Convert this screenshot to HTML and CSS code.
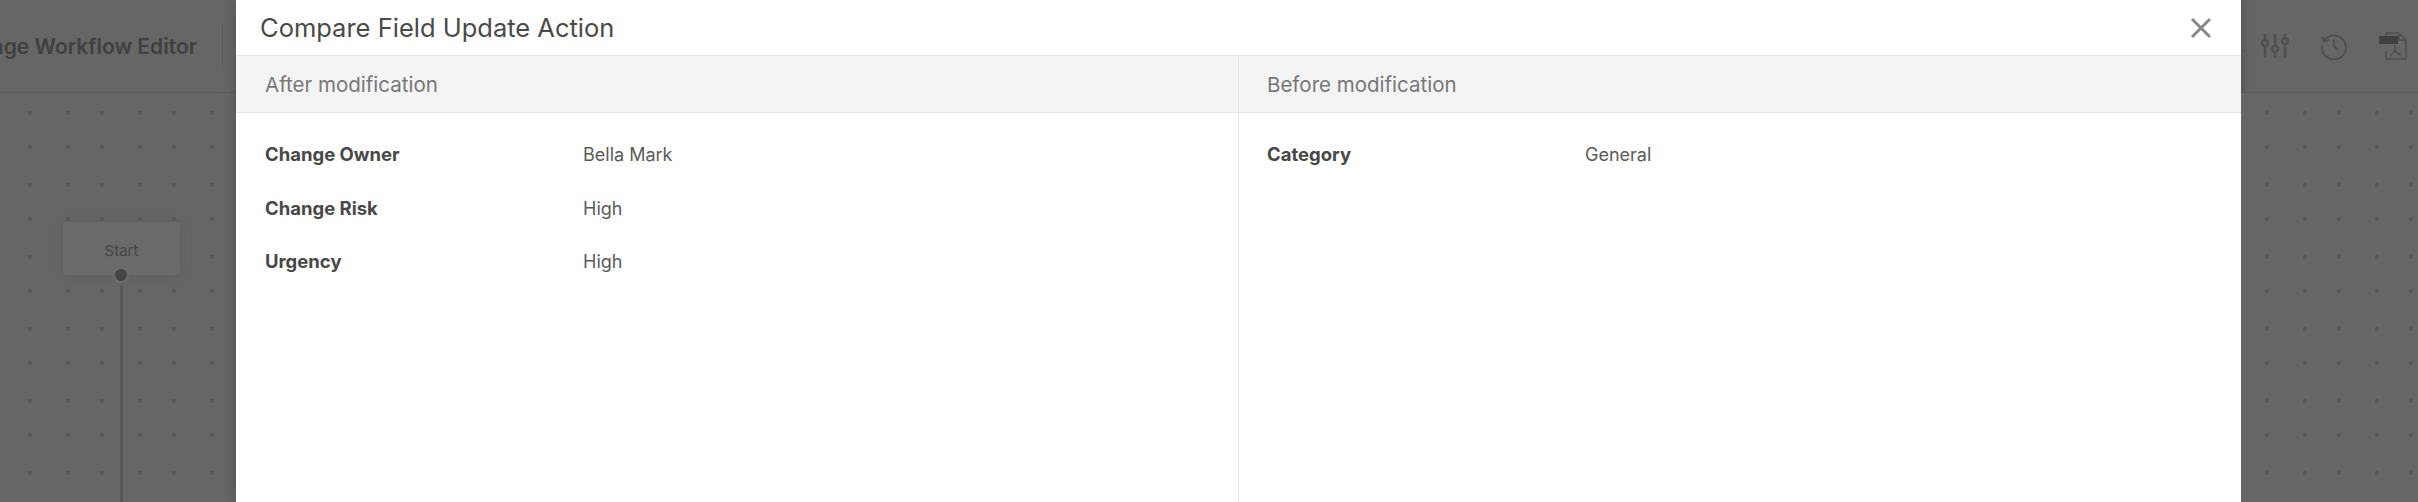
FILE: index.html
```html
<!doctype html>
<html>
<head>
<meta charset="utf-8">
<title>Compare Field Update Action</title>
<link rel="stylesheet" href="styles.css">
</head>
<body>
<div class="app">
    <div class="side side-left">
        <div class="topbar topbar-left">
            <span class="page-title">Change Workflow Editor</span>
            <span class="top-sep"></span>
        </div>
        <div class="canvas">
            <div class="node-start">Start<span class="node-port"></span></div>
            <div class="node-line"></div>
        </div>
    </div>

    <div class="modal">
        <div class="modal-head">
            <span class="modal-title">Compare Field Update Action</span>
            <svg class="modal-close" width="22" height="22" viewBox="0 0 22 22"><path d="M2 2L20 20M20 2L2 20" fill="none" stroke="#888" stroke-width="3"/></svg>
        </div>
        <div class="compare">
            <div class="col">
                <div class="col-head">After modification</div>
                <div class="col-body">
                    <div class="row"><span class="row-label">Change Owner</span><span class="row-value">Bella Mark</span></div>
                    <div class="row"><span class="row-label">Change Risk</span><span class="row-value">High</span></div>
                    <div class="row"><span class="row-label">Urgency</span><span class="row-value">High</span></div>
                </div>
            </div>
            <div class="col col-right">
                <div class="col-head">Before modification</div>
                <div class="col-body">
                    <div class="row"><span class="row-label">Category</span><span class="row-value">General</span></div>
                </div>
            </div>
        </div>
    </div>

    <div class="side side-right">
        <div class="topbar topbar-right">
            <svg width="28" height="26" viewBox="0 0 28 26" fill="none" stroke="#505050" stroke-width="2.4">
                <path d="M4 1V7M4 13V25M14 1V13M14 19V25M24 1V5M24 11V25"/>
                <circle cx="4" cy="10" r="3"/><circle cx="14" cy="16" r="3"/><circle cx="24" cy="8" r="3"/>
            </svg>
            <svg width="28" height="28" viewBox="0 0 28 28" fill="none" stroke="#505050" stroke-width="2">
                <path d="M4.500 8A12 12 0 1 1 2 14"/><path d="M2 5L4 9.500L9 8"/><path d="M14 8V14L18 18"/>
            </svg>
            <svg width="28" height="28" viewBox="0 0 28 28" fill="none" stroke="#505050" stroke-width="1.600">
                <path d="M7 12V1H20L27 8V27H7V19"/><path d="M20 1V8H27"/>
                <rect x="0" y="4" width="19" height="8" fill="#404040" stroke="none"/>
                <path d="M16 13V19L11 24M16 19L22 23"/>
            </svg>
        </div>
        <div class="canvas"></div>
    </div>
</div>
</body>
</html>
```

FILE: styles.css
```css
* {margin:0; padding:0; box-sizing:border-box;}
html,body {height:100%; overflow:hidden;}
body {
	font-family:Inter, 'Noto Sans', sans-serif;
	background:#666;
}
.app {
	display:grid;
	grid-template-columns:236px 2005px 177px;
	height:502px;
}

/* dimmed page behind the dialog */
.side {display:flex; flex-direction:column; min-width:0; overflow:hidden;}
.topbar {
	display:flex;
	align-items:center;
	height:93px;
	flex:none;
	border-bottom:1px solid #606060;
}
.topbar-left {justify-content:flex-end; padding-right:13px;}
.page-title {
	flex:none;
	font-size:21px;
	font-weight:600;
	color:#404040;
	white-space:nowrap;
}
.top-sep {
	flex:none;
	width:1px;
	height:44px;
	margin-left:25px;
	background:#5f5f5f;
}
.topbar-right {gap:31px; padding-left:20px;}

/* four dots in each 72px tile, that is why the spacing goes 38/34 */
.canvas {
	position:relative;
	flex:1;
	background-color:#666;
	background-image:
		radial-gradient(circle, #585858 1.5px, transparent 2.500px),
		radial-gradient(circle, #585858 1.5px, transparent 2.500px),
		radial-gradient(circle, #585858 1.5px, transparent 2.500px),
		radial-gradient(circle, #585858 1.5px, transparent 2.500px);
	background-size:72px 72px;
	background-position:-6px -16px, 32px -16px, -6px 18px, 32px 18px;
}
.side-right .canvas {background-position:-10px -16px, 28px -16px, -10px 18px, 28px 18px;}

.node-start {
	position:absolute;
	left:63px;
	top:129px;
	width:117px;
	height:53px;
	text-align:center;
	line-height:58px;
	font-size:15px;
	color:#464646;
	background:#6a6a6a;
	box-shadow:0 0 8px #5e5e5e;
}
.node-port {
	position:absolute;
	left:52px;
	top:47px;
	width:12px;
	height:12px;
	border-radius:50%;
	background:#444;
	box-shadow:0 0 0 2px #6c6c6c;
}
.node-line {
	position:absolute;
	left:120px;
	top:192px;
	bottom:0;
	width:3px;
	background:#585858;
}

/* dialog */
.modal {
	position:relative;
	display:flex;
	flex-direction:column;
	background:#fff;
	box-shadow:0 0 12px rgba(0,0,0,.25);
}
.modal-head {
	display:flex;
	align-items:center;
	justify-content:space-between;
	height:55px;
	padding:0 29px 0 24px;
	flex:none;
}
.modal-title {font-size:25.500px; color:#4a4a4a;}
.compare {
	display:grid;
	grid-template-columns:1002px 1fr;
	flex:1;
}
.col-right {border-left:1px solid #e6e6e6;}
.col-head {
	height:58px;
	padding-left:29px;
	line-height:57px;
	font-size:20.500px;
	color:#777;
	background:#f4f4f4;
	border-top:1px solid #e6e6e6;
	border-bottom:1px solid #e6e6e6;
}
.col-right .col-head,
.col-right .row {padding-left:28px;}
.col-body {padding-top:15px;}
.row {
	display:flex;
	align-items:baseline;
	height:53.500px;
	line-height:53.500px;
	padding-left:29px;
	font-size:18px;
	color:#5a5a5a;
}
.row-label {width:318px; font-size:18.500px; font-weight:700; color:#484848;}
```
